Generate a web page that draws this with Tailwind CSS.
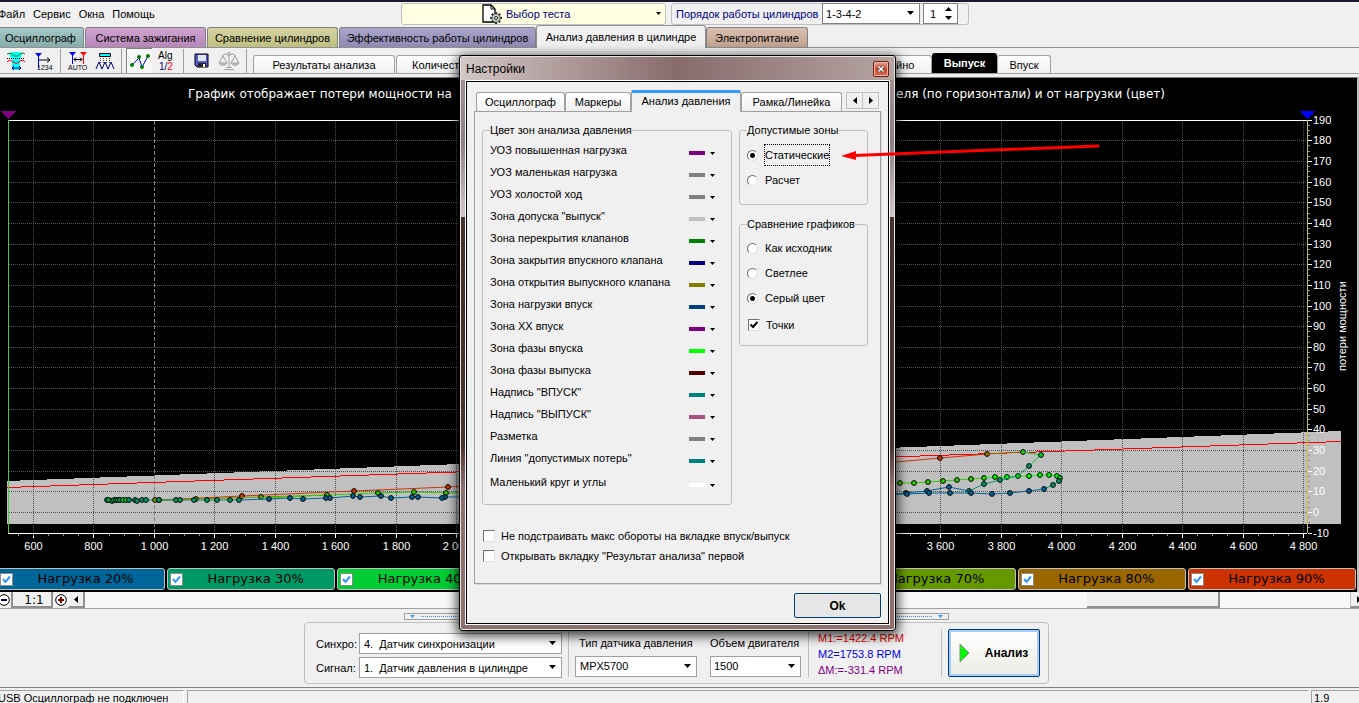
<!DOCTYPE html>
<html lang="ru">
<head>
    <meta charset="UTF-8">
    <meta name="viewport" content="width=device-width, initial-scale=1.0">
    <title>USB Осциллограф</title>
    <script src="https://cdn.jsdelivr.net/npm/@tailwindcss/browser@4"></script>
</head>
<body class="relative flex h-screen flex-col overflow-hidden border-t-2 border-[#1c1a2c] bg-[#f0f0f0] font-['Liberation_Sans',Arial,sans-serif] text-[11px] leading-4 text-black">

    <!-- Menu and test selection -->
    <header class="flex h-[23px] items-center">
        <nav class="flex w-[401px] gap-2">
            <a href="#" class="-ml-[2px]">Файл</a>
            <a href="#">Сервис</a>
            <a href="#">Окна</a>
            <a href="#">Помощь</a>
        </nav>
        <button class="flex h-[22px] w-[265px] items-center rounded-[3px] border border-[#c0c0c0] bg-[#ffffe1] pr-1 pl-20 text-[#000080]">
            <svg class="mr-1 h-5 w-5" viewBox="0 0 20 20">
                <path d="M1 1h8l4 4v13H1z" fill="#fff" stroke="#000" stroke-width="1.3"/>
                <path d="M9 1v4h4" fill="none" stroke="#000"/>
                <path d="M14 8v12M8 14h12M9.800 9.800l8.400 8.400M18.200 9.800l-8.400 8.400" stroke="#333" stroke-width="2.200"/>
                <circle cx="14" cy="14" r="4.200" fill="#c4d8c4" stroke="#444"/>
                <circle cx="14" cy="14" r="1.500" fill="#fff" stroke="#222"/>
            </svg>
            <span>Выбор теста</span>
            <svg class="ml-auto h-[3px] w-[5px]" viewBox="0 0 5 3"><path d="M0 0h5L2.500 3z"/></svg>
        </button>
        <div class="ml-[5px] flex h-[22px] items-center rounded-[3px] border border-[#c0c0c0] pr-[10px] pl-1">
            <label for="order" class="w-[146px] whitespace-nowrap text-[#000080]">Порядок работы цилиндров</label>
            <div class="relative">
                <select id="order" class="block h-[21px] w-[98px] appearance-none border border-[#808080] bg-white px-[3px]"><option>1-3-4-2</option></select>
                <svg class="pointer-events-none absolute top-2 right-[6px] h-1 w-[7px]" viewBox="0 0 7 4"><path d="M0 0h7L3.500 4z"/></svg>
            </div>
            <div class="relative ml-[3px]">
                <input type="text" aria-label="Номер цилиндра" value="1" class="block h-[21px] w-[35px] border border-[#808080] bg-white px-[6px]">
                <svg class="pointer-events-none absolute top-1 right-[6px] h-[13px] w-[7px]" viewBox="0 0 7 13"><path d="M0 4h7L3.500 0zM0 9h7l-3.500 4z"/></svg>
            </div>
        </div>
    </header>

    <!-- Mode tabs -->
    <div class="flex h-[23px] items-end gap-px border-b border-[#909090] whitespace-nowrap">
        <button class="-ml-[3px] h-5 w-[87px] rounded-t-[3px] border border-b-0 border-[#808080] bg-linear-to-b from-[#a5c8c6] to-[#86adab]">Осциллограф</button>
        <button class="h-5 w-[121px] rounded-t-[3px] border border-b-0 border-[#808080] bg-linear-to-b from-[#cfa5d0] to-[#b886ba]">Система зажигания</button>
        <button class="h-5 w-[131px] rounded-t-[3px] border border-b-0 border-[#808080] bg-linear-to-b from-[#d3d3a3] to-[#bfbf80]">Сравнение цилиндров</button>
        <div class="flex items-end">
            <button class="h-5 w-[197px] rounded-t-[3px] border border-b-0 border-[#808080] bg-linear-to-b from-[#aaa5c9] to-[#8f89b5]">Эффективность работы цилиндров</button>
            <button class="-mb-px h-[23px] w-[170px] rounded-t-[3px] border border-b-0 border-[#909090] bg-[#f0f0f0]">Анализ давления в цилиндре</button>
            <button class="h-5 w-[102px] rounded-t-[3px] border border-b-0 border-[#808080] bg-linear-to-b from-[#d8bfb0] to-[#c2a190]">Электропитание</button>
        </div>
    </div>

    <!-- Toolbar -->
    <div class="flex h-[26px] items-end border-b border-[#a0a0a0] whitespace-nowrap">
        <div class="flex h-[25px] items-center">
            <button class="ml-[6px]" aria-label="Зоны">
                <svg class="h-5 w-5" viewBox="0 0 20 20" fill="none">
                    <path d="M6 1h8l2 2-2 6v10H6V9L3 3z" fill="#0ff"/>
                    <path d="M1 3l3-1 3 2 1 1h4l2-2 3-1 2 1" stroke="#080"/>
                    <path d="M1 7.500h18" stroke="#000" stroke-dasharray="1 1"/>
                    <path d="M1 11l3-2 3 2 2 1h3l2-2 3-1 2 2" stroke="#f00"/>
                    <path d="M6 17h9M8 15l-2 2 2 2M13 15l2 2-2 2" stroke="#000080"/>
                </svg>
            </button>
            <button class="ml-[9px]" aria-label="Нумерация">
                <svg class="h-5 w-[18px]" viewBox="0 0 18 20">
                    <path d="M0 2h7L3.500 6z" fill="#00f"/><path d="M3.500 4v13" stroke="#00f"/>
                    <path d="M4 9h11M12 6.500l3 2.500-3 2.500" fill="none" stroke="#000"/>
                    <text x="2" y="19" font-size="7">1234</text>
                </svg>
            </button>
            <div class="ml-[7px] h-6 w-px bg-[#a0a0a0]"></div>
            <button class="ml-[7px]" aria-label="Авто">
                <svg class="h-5 w-5" viewBox="0 0 20 20">
                    <path d="M1 1h7L4.500 5z" fill="#00f"/><path d="M4.500 4v9" stroke="#00f"/>
                    <path d="M12 1h7l-3.500 4z" fill="#f00"/><path d="M15.500 4v9" stroke="#f00"/>
                    <path d="M6 8.500h8M8 6.500l-2 2 2 2M12 6.500l2 2-2 2" fill="none" stroke="#000"/>
                    <text x="0" y="19" font-size="7">AUTO</text>
                </svg>
            </button>
            <button class="ml-[7px]" aria-label="Сигнал">
                <svg class="h-5 w-5" viewBox="0 0 20 20" fill="none">
                    <path d="M4.500 2.500h11v3h-11z" fill="#0ff" stroke="#000"/>
                    <path d="M5.500 7v6M8.500 7v6M11.500 7v6M14.500 7v6" stroke="#444" stroke-dasharray="1 1"/>
                    <path d="M1 18l3-7 3 7 3-7 3 7 3-7 3 7" stroke="#000080"/>
                </svg>
            </button>
            <div class="ml-[6px] h-6 w-px bg-[#a0a0a0]"></div>
            <button class="ml-1 flex h-[25px] w-[26px] items-center justify-center border-t border-l border-[#808080] bg-[#f8f8f8]" aria-label="Точки">
                <svg class="h-4 w-5" viewBox="0 0 20 16">
                    <path d="M2 12l7-7 3 9 6-11" fill="none" stroke="#00f"/>
                    <g fill="#008000"><circle cx="2" cy="12" r="2"/><circle cx="9" cy="4" r="2"/><circle cx="12" cy="14" r="2"/><circle cx="18" cy="3" r="2"/></g>
                </svg>
            </button>
            <button class="ml-[6px] flex w-[18px] flex-col" aria-label="Алгоритм">
                <svg class="h-5 w-[18px]" viewBox="0 0 18 20">
                    <text x="0" y="8" font-size="10">Alg</text>
                    <text x="1" y="19" font-size="10" fill="#000080">1/<tspan fill="#f00">2</tspan></text>
                </svg>
            </button>
            <div class="ml-[7px] h-6 w-px bg-[#a0a0a0]"></div>
            <button class="ml-[10px]" aria-label="Сохранить">
                <svg class="h-4 w-4" viewBox="0 0 16 16">
                    <path d="M1 1h13v13H3l-2-2z" fill="#5a5ac8" stroke="#000"/>
                    <path d="M4 2h8v6H4z" fill="#dfe6f5"/><path d="M4 10h8v4H4z" fill="#222"/><path d="M9 11h2v3H9z" fill="#fff"/>
                </svg>
            </button>
            <button class="ml-[8px]" aria-label="Весы">
                <svg class="h-5 w-[22px]" viewBox="0 0 22 20" fill="none" stroke="#a0a0a0">
                    <circle cx="11" cy="3" r="1.500"/>
                    <path d="M11 4v13M4 5l3-2 4 1 4-1 3 2M6 18.500h10M8 16.500h6"/>
                    <path d="M5 5l-4 7M5 5l4 7M17 5l-4 7M17 5l4 7"/><path d="M1 12c1 3 7 3 8 0zM13 12c1 3 7 3 8 0z" fill="#c8c8c8"/>
                </svg>
            </button>
            <div class="ml-[6px] h-6 w-px bg-[#a0a0a0]"></div>
        </div>
        <button class="ml-[6px] h-[18px] w-[142px] rounded-t-[3px] border border-b-0 border-[#a0a0a0] bg-linear-to-b from-white to-[#f0f0f0]">Результаты анализа</button>
        <button class="ml-px h-[18px] w-[456px] rounded-t-[3px] border border-b-0 border-[#a0a0a0] bg-linear-to-b from-white to-[#f0f0f0] pl-[15px] text-left">Количество</button>
        <button class="ml-px h-[18px] w-[79px] rounded-t-[3px] border border-b-0 border-[#a0a0a0] bg-linear-to-b from-white to-[#f0f0f0]">Линейно</button>
        <button class="h-5 w-[65px] rounded-t-[3px] bg-black font-bold text-white">Выпуск</button>
        <button class="h-[18px] w-[54px] rounded-t-[3px] border border-b-0 border-[#a0a0a0] bg-linear-to-b from-white to-[#f0f0f0]">Впуск</button>
    </div>

    <!-- Chart -->
    <main class="mt-[3px] border-t border-r-2 border-t-[#808080] border-r-[#c0c0c0] bg-black">
        <svg id="chart" class="block w-full" viewBox="0 78 1357 489" font-size="11" fill="#fff" shape-rendering="crispEdges">
            <g font-family="DejaVu Sans, Verdana, sans-serif" font-size="12">
                <text x="188" y="98">График отображает потери мощности на</text>
                <text x="1165" y="98" text-anchor="end">оборотов двигателя (по горизонтали) и от нагрузки (цвет)</text>
            </g>
            <path d="M7 481L1341 431V524H7z" fill="#c0c0c0"/>
            <g id="grid" fill="none"></g>
            <path d="M7 487.500L1341 441.500" stroke="#f00" fill="none"/>
            <path d="M8 120.500H1307M8 533.500H1307" stroke="#fff"/>
            <path d="M8.500 120V533" stroke="#4c4"/>
            <path d="M1307.500 120V533" stroke="#c8c040"/>
            <path d="M0 111h16l-8 8z" fill="#800080"/>
            <path d="M1299 111h16l-8 8z" fill="#00f"/>
            <g id="axes"></g>
            <g id="series" shape-rendering="auto"></g>
            <text transform="translate(1346 371) rotate(-90)">потери мощности</text>
        </svg>

        <!-- Load legend -->
        <div class="mr-px -ml-[3px] grid grid-cols-8 gap-[2px] pt-px pb-[2px] font-['DejaVu_Sans',Verdana,sans-serif] text-[13px] whitespace-nowrap">
            <label class="flex h-[22px] items-center rounded-[3px] border border-[#c0c0c0] bg-[#006699] pl-[2px]"><input type="checkbox" checked class="h-[13px] w-[13px] appearance-none border border-[#8a8a8a] bg-white"><svg class="-ml-[11px] h-[9px] w-[9px]" viewBox="0 0 9 9"><path d="M1 4l2.500 3L8 1.500" fill="none" stroke="#3399ff" stroke-width="2"/></svg><span class="flex-1 pr-1 text-center">Нагрузка 20%</span></label>
            <label class="flex h-[22px] items-center rounded-[3px] border border-[#c0c0c0] bg-[#009966] pl-[2px]"><input type="checkbox" checked class="h-[13px] w-[13px] appearance-none border border-[#8a8a8a] bg-white"><svg class="-ml-[11px] h-[9px] w-[9px]" viewBox="0 0 9 9"><path d="M1 4l2.500 3L8 1.500" fill="none" stroke="#3399ff" stroke-width="2"/></svg><span class="flex-1 pr-1 text-center">Нагрузка 30%</span></label>
            <label class="flex h-[22px] items-center rounded-[3px] border border-[#c0c0c0] bg-[#00cc33] pl-[2px]"><input type="checkbox" checked class="h-[13px] w-[13px] appearance-none border border-[#8a8a8a] bg-white"><svg class="-ml-[11px] h-[9px] w-[9px]" viewBox="0 0 9 9"><path d="M1 4l2.500 3L8 1.500" fill="none" stroke="#3399ff" stroke-width="2"/></svg><span class="flex-1 pr-1 text-center">Нагрузка 40%</span></label>
            <label class="flex h-[22px] items-center rounded-[3px] border border-[#c0c0c0] bg-[#00ff00] pl-[2px]"><input type="checkbox" checked class="h-[13px] w-[13px] appearance-none border border-[#8a8a8a] bg-white"><svg class="-ml-[11px] h-[9px] w-[9px]" viewBox="0 0 9 9"><path d="M1 4l2.500 3L8 1.500" fill="none" stroke="#3399ff" stroke-width="2"/></svg><span class="flex-1 pr-1 text-center">Нагрузка 50%</span></label>
            <label class="flex h-[22px] items-center rounded-[3px] border border-[#c0c0c0] bg-[#33cc00] pl-[2px]"><input type="checkbox" checked class="h-[13px] w-[13px] appearance-none border border-[#8a8a8a] bg-white"><svg class="-ml-[11px] h-[9px] w-[9px]" viewBox="0 0 9 9"><path d="M1 4l2.500 3L8 1.500" fill="none" stroke="#3399ff" stroke-width="2"/></svg><span class="flex-1 pr-1 text-center">Нагрузка 60%</span></label>
            <label class="flex h-[22px] items-center rounded-[3px] border border-[#c0c0c0] bg-[#669900] pl-[2px]"><input type="checkbox" checked class="h-[13px] w-[13px] appearance-none border border-[#8a8a8a] bg-white"><svg class="-ml-[11px] h-[9px] w-[9px]" viewBox="0 0 9 9"><path d="M1 4l2.500 3L8 1.500" fill="none" stroke="#3399ff" stroke-width="2"/></svg><span class="flex-1 pr-1 text-center">Нагрузка 70%</span></label>
            <label class="flex h-[22px] items-center rounded-[3px] border border-[#c0c0c0] bg-[#996600] pl-[2px]"><input type="checkbox" checked class="h-[13px] w-[13px] appearance-none border border-[#8a8a8a] bg-white"><svg class="-ml-[11px] h-[9px] w-[9px]" viewBox="0 0 9 9"><path d="M1 4l2.500 3L8 1.500" fill="none" stroke="#3399ff" stroke-width="2"/></svg><span class="flex-1 pr-1 text-center">Нагрузка 80%</span></label>
            <label class="flex h-[22px] items-center rounded-[3px] border border-[#c0c0c0] bg-[#cc3300] pl-[2px]"><input type="checkbox" checked class="h-[13px] w-[13px] appearance-none border border-[#8a8a8a] bg-white"><svg class="-ml-[11px] h-[9px] w-[9px]" viewBox="0 0 9 9"><path d="M1 4l2.500 3L8 1.500" fill="none" stroke="#3399ff" stroke-width="2"/></svg><span class="flex-1 pr-1 text-center">Нагрузка 90%</span></label>
        </div>
    </main>

    <!-- Zoom and scroll -->
    <div class="flex h-[17px] border-b border-[#a0a0a0]">
        <button class="-ml-1 flex w-[17px] items-center justify-center border-r-2 border-[#909090]" aria-label="Уменьшить">
            <svg class="h-3 w-3" viewBox="0 0 12 12"><circle cx="6" cy="6" r="5.300" fill="#fff" stroke="#000"/><path d="M3 6h6" stroke="#000080" stroke-width="2"/></svg>
        </button>
        <button class="w-10 border-r-2 border-b-2 border-[#909090] pl-1 font-['DejaVu_Sans',Verdana,sans-serif] text-xs">1:1</button>
        <button class="flex w-[15px] items-center justify-center" aria-label="Увеличить">
            <svg class="h-3 w-3" viewBox="0 0 12 12"><circle cx="6" cy="6" r="5.300" fill="#fff" stroke="#000"/><path d="M3 6h6M6 3v6" stroke="#800000" stroke-width="2"/></svg>
        </button>
        <button class="flex w-[17px] items-center justify-center border-r-2 border-b-2 border-l border-r-[#909090] border-b-[#909090] border-l-white" aria-label="Влево">
            <svg class="h-[7px] w-1" viewBox="0 0 4 7"><path d="M4 0v7L0 3.500z"/></svg>
        </button>
        <div class="flex flex-1 justify-end bg-[repeating-conic-gradient(#ffffff_0_25%,#f2f2f2_0_50%)] bg-[length:2px_2px] pr-[130px]">
            <div class="w-[133px] border-r-2 border-b-2 border-[#909090] bg-[#f0f0f0]"></div>
        </div>
        <button class="-mr-[7px] flex w-4 items-center justify-center border-b-2 border-l border-b-[#909090] border-l-[#c0c0c0]" aria-label="Вправо">
            <svg class="h-[7px] w-1" viewBox="0 0 4 7"><path d="M0 0v7l4-3.500z"/></svg>
        </button>
    </div>

    <!-- Bottom panel -->
    <section class="mt-1 ml-[304px] w-[745px]">
        <div class="mx-[100px] flex h-[7px] items-center border border-[#a0a0a0] px-[5px]">
            <svg class="h-[3px] w-[5px]" viewBox="0 0 5 3"><path d="M0 0h5L2.500 3z" fill="#39f"/></svg>
            <div class="mx-[6px] flex-1 border-t border-dotted border-[#3399ff]"></div>
            <svg class="h-[3px] w-[5px]" viewBox="0 0 5 3"><path d="M0 0h5L2.500 3z" fill="#39f"/></svg>
        </div>
        <div class="mt-[2px] flex h-[62px] items-center rounded-[4px] border border-[#c0c0c0] pl-[11px]">
            <div class="mt-[5px] grid grid-cols-[43px_203px] items-center gap-y-[3px]">
                <label for="sync">Синхро:</label>
                <div class="relative">
                    <select id="sync" class="block h-[21px] w-full appearance-none border border-[#a0a0a0] bg-white px-1"><option>4.&nbsp; Датчик синхронизации</option></select>
                    <svg class="pointer-events-none absolute top-2 right-[6px] h-1 w-[7px]" viewBox="0 0 7 4"><path d="M0 0h7L3.500 4z"/></svg>
                </div>
                <label for="signal">Сигнал:</label>
                <div class="relative">
                    <select id="signal" class="block h-[21px] w-full appearance-none border border-[#a0a0a0] bg-white px-1"><option>1.&nbsp; Датчик давления в цилиндре</option></select>
                    <svg class="pointer-events-none absolute top-2 right-[6px] h-1 w-[7px]" viewBox="0 0 7 4"><path d="M0 0h7L3.500 4z"/></svg>
                </div>
            </div>
            <div class="ml-[6px] h-12 w-px bg-[#c0c0c0]"></div>
            <div class="mt-[5px] ml-[6px] w-[122px]">
                <label for="sensor" class="mb-[5px] block pl-1 whitespace-nowrap">Тип датчика давления</label>
                <div class="relative">
                    <select id="sensor" class="block h-[21px] w-full appearance-none border border-[#a0a0a0] bg-white px-1"><option>MPX5700</option></select>
                    <svg class="pointer-events-none absolute top-2 right-[6px] h-1 w-[7px]" viewBox="0 0 7 4"><path d="M0 0h7L3.500 4z"/></svg>
                </div>
            </div>
            <div class="mt-[5px] ml-[13px]">
                <label for="volume" class="mb-[5px] block whitespace-nowrap">Объем двигателя</label>
                <div class="relative w-[91px]">
                    <select id="volume" class="block h-[21px] w-full appearance-none border border-[#a0a0a0] bg-white px-[3px]"><option>1500</option></select>
                    <svg class="pointer-events-none absolute top-2 right-[6px] h-1 w-[7px]" viewBox="0 0 7 4"><path d="M0 0h7L3.500 4z"/></svg>
                </div>
            </div>
            <div class="ml-[7px] h-12 w-px bg-[#c0c0c0]"></div>
            <div class="mt-px ml-[9px] w-[123px]">
                <p class="text-[#e00000]">M1:=1422.4 RPM</p>
                <p class="text-[#0000e0]">M2=1753.8 RPM</p>
                <p class="text-[#800080]">ΔM:=-331.4 RPM</p>
            </div>
            <div class="h-12 w-px bg-[#c0c0c0]"></div>
            <button class="ml-[6px] flex h-12 w-[92px] items-center rounded-[2px] border border-[#003c74] bg-linear-to-b from-white to-[#ececE4] pr-1 pl-[10px] font-bold shadow-[inset_0_0_0_2px_#a8ccf8]">
                <svg class="h-5 w-[11px]" viewBox="0 0 11 20"><path d="M1 1v18l9-9z" fill="#0f0" stroke="#888"/></svg>
                <span class="flex-1 pl-2 text-xs">Анализ</span>
            </button>
        </div>
    </section>

    <!-- Status bar -->
    <footer class="mt-auto flex h-4 gap-[3px] border-t border-[#808080] pt-[2px] leading-[14px] whitespace-nowrap">
        <div class="-ml-[3px] w-[187px] border-t border-r border-t-[#a0a0a0] border-r-white pl-px">USB Осциллограф не подключен</div>
        <div class="flex-1 border-t border-l border-[#a0a0a0]"></div>
        <div class="w-12 border-t border-l border-[#a0a0a0] pl-[2px]">1.9</div>
    </footer>

    <!-- Settings window -->
    <div role="dialog" aria-labelledby="dlg-title" class="absolute top-[53px] left-[459px] flex h-[576px] w-[437px] flex-col rounded-[3px] border border-black bg-[linear-gradient(#a89896,#8c8082_15%,#cfc8ca_28%,#44302e_28%,#4a3432_68%,#8c706e_75%)] px-[5px] pb-[5px] shadow-[0_3px_12px_2px_rgba(0,0,0,0.75),inset_0_0_0_1px_#e8e0e0]">
        <div class="-mx-1 mt-px flex h-[23px] items-center bg-linear-to-r from-[#d2c8c6] via-[#886c6c] to-[#b4a4a2] px-[5px]">
            <h1 id="dlg-title" class="text-xs">Настройки</h1>
            <button class="ml-auto flex h-4 w-4 items-center justify-center rounded-[2px] border border-[#6b2014] bg-linear-to-b from-[#e8a090] via-[#c8452c] to-[#d86a4c] shadow-[inset_0_0_0_1px_#f0b8a8]" aria-label="Закрыть">
                <svg class="h-2 w-2" viewBox="0 0 8 8"><path d="M1.500 1.500l5 5M6.500 1.500l-5 5" stroke="#444" stroke-width="3"/><path d="M1.500 1.500l5 5M6.500 1.500l-5 5" stroke="#fff" stroke-width="1.500"/></svg>
            </button>
        </div>
        <div class="flex flex-1 flex-col border border-white">
            <div class="flex flex-1 flex-col border border-black bg-[#f0f0f0] px-[7px]">
                <div class="flex h-[29px] items-end whitespace-nowrap">
                    <button class="ml-[2px] h-[19px] w-[89px] rounded-t-[3px] border border-b-0 border-[#a0a0a0] bg-linear-to-b from-white to-[#f0f0f0]">Осциллограф</button>
                    <button class="h-[19px] w-[66px] rounded-t-[3px] border border-b-0 border-[#a0a0a0] bg-linear-to-b from-white to-[#f0f0f0]">Маркеры</button>
                    <button class="relative -mb-px h-[22px] w-[110px] rounded-t-[2px] border border-t-[3px] border-b-0 border-[#a0a0a0] border-t-[#3399ff] bg-[#f0f0f0] pb-1">Анализ давления</button>
                    <button class="h-[19px] w-[101px] rounded-t-[3px] border border-b-0 border-[#a0a0a0] bg-linear-to-b from-white to-[#f0f0f0]">Рамка/Линейка</button>
                    <button class="mb-[2px] ml-1 flex h-[17px] w-[17px] items-center justify-center border border-[#c0c0c0]" aria-label="Назад"><svg class="h-[7px] w-1" viewBox="0 0 4 7"><path d="M4 0v7L0 3.500z"/></svg></button>
                    <button class="mb-[2px] -ml-px flex h-[17px] w-[17px] items-center justify-center border border-[#c0c0c0]" aria-label="Вперед"><svg class="h-[7px] w-1" viewBox="0 0 4 7"><path d="M0 0v7l4-3.500z"/></svg></button>
                </div>
                <div class="h-[473px] border border-[#a0a0a0] pt-[11px] pl-[7px] shadow-[1px_1px_0_#d8d8d8]">
                    <div class="flex items-start gap-[7px]">
                        <fieldset class="h-[382px] w-[250px] rounded-[3px] border border-[#c0c0c0] px-[7px]">
                            <legend class="leading-[14px]">Цвет зон анализа давления</legend>
                            <ul id="zones" class="pt-[2px]"></ul>
                        </fieldset>
                        <div class="flex w-[129px] flex-col gap-[12px]">
                            <fieldset class="h-[82px] rounded-[3px] border border-[#c0c0c0] px-[7px]">
                                <legend class="leading-[14px]">Допустимые зоны</legend>
                                <div class="flex flex-col gap-[3px] pt-[7px]">
                                    <label class="flex h-[22px] items-center gap-[6px]"><input type="radio" name="zone" checked class="h-[11px] w-[11px] appearance-none rounded-full border border-[#707070] border-r-[#e0e0e0] border-b-[#e0e0e0] bg-white checked:bg-[radial-gradient(circle,#000_2px,#fff_3px)]"><span class="flex h-[22px] items-center border border-dotted border-black whitespace-nowrap">Статические</span></label>
                                    <label class="flex h-[22px] items-center gap-[7px]"><input type="radio" name="zone" class="h-[11px] w-[11px] appearance-none rounded-full border border-[#707070] border-r-[#e0e0e0] border-b-[#e0e0e0] bg-white checked:bg-[radial-gradient(circle,#000_2px,#fff_3px)]">Расчет</label>
                                </div>
                            </fieldset>
                            <fieldset class="h-[129px] rounded-[3px] border border-[#c0c0c0] px-[7px]">
                                <legend class="leading-[14px]">Сравнение графиков</legend>
                                <div class="flex flex-col gap-[3px] pt-[6px]">
                                    <label class="flex h-[22px] items-center gap-[7px]"><input type="radio" name="cmp" class="h-[11px] w-[11px] appearance-none rounded-full border border-[#707070] border-r-[#e0e0e0] border-b-[#e0e0e0] bg-white checked:bg-[radial-gradient(circle,#000_2px,#fff_3px)]">Как исходник</label>
                                    <label class="flex h-[22px] items-center gap-[7px]"><input type="radio" name="cmp" class="h-[11px] w-[11px] appearance-none rounded-full border border-[#707070] border-r-[#e0e0e0] border-b-[#e0e0e0] bg-white checked:bg-[radial-gradient(circle,#000_2px,#fff_3px)]">Светлее</label>
                                    <label class="flex h-[22px] items-center gap-[7px]"><input type="radio" name="cmp" checked class="h-[11px] w-[11px] appearance-none rounded-full border border-[#707070] border-r-[#e0e0e0] border-b-[#e0e0e0] bg-white checked:bg-[radial-gradient(circle,#000_2px,#fff_3px)]">Серый цвет</label>
                                    <label class="mt-[2px] ml-px flex h-[22px] items-center"><input type="checkbox" checked class="h-3 w-3 appearance-none border border-[#707070] border-r-[#e0e0e0] border-b-[#e0e0e0] bg-white"><svg class="mr-2 -ml-[10px] h-2 w-2" viewBox="0 0 8 8"><path d="M.5 3.500L3 6l4.500-5" fill="none" stroke="#000" stroke-width="2"/></svg>Точки</label>
                                </div>
                            </fieldset>
                        </div>
                    </div>
                    <div class="mt-[23px] flex flex-col gap-1 pl-px whitespace-nowrap">
                        <label class="flex items-center gap-[6px]"><input type="checkbox" class="h-3 w-3 appearance-none border border-[#707070] border-r-[#e0e0e0] border-b-[#e0e0e0] bg-white">Не подстраивать макс обороты на вкладке впуск/выпуск</label>
                        <label class="flex items-center gap-[6px]"><input type="checkbox" class="h-3 w-3 appearance-none border border-[#707070] border-r-[#e0e0e0] border-b-[#e0e0e0] bg-white">Открывать вкладку "Результат анализа" первой</label>
                    </div>
                </div>
                <button class="mt-[9px] h-[25px] w-[87px] self-end rounded-[2px] border border-[#003c74] bg-[#e6e6e6] text-xs font-bold">Ok</button>
            </div>
        </div>
    </div>

    <!-- Callout arrow -->
    <svg class="pointer-events-none absolute top-[138px] left-[840px] h-6 w-[262px]" viewBox="0 0 262 24">
        <path d="M258 6L14 15.500" stroke="#f00" stroke-width="3" stroke-linecap="round"/>
        <path d="M1 16l15-5v9z" fill="#f00"/>
    </svg>

    <template id="zone-row">
        <li class="flex h-[22px] items-center last:mt-[2px]">
            <span class="flex-1 whitespace-nowrap"></span>
            <button class="flex items-center gap-[5px] pt-[6px] pr-[9px]"><i class="h-1 w-4"></i><svg class="h-[3px] w-[5px]" viewBox="0 0 5 3"><path d="M0 0h5L2.500 3z"/></svg></button>
        </li>
    </template>

    <script>
        // Colour rows of the settings window
        const zones = [
            ['УОЗ повышенная нагрузка', '#800080'],
            ['УОЗ маленькая нагрузка', '#808080'],
            ['УОЗ холостой ход', '#808080'],
            ['Зона допуска "выпуск"', '#c0c0c0'],
            ['Зона перекрытия клапанов', '#008000'],
            ['Зона закрытия впускного клапана', '#000080'],
            ['Зона открытия выпускного клапана', '#808000'],
            ['Зона нагрузки впуск', '#004080'],
            ['Зона XX впуск', '#800080'],
            ['Зона фазы впуска', '#00ff00'],
            ['Зона фазы выпуска', '#500000'],
            ['Надпись "ВПУСК"', '#008080'],
            ['Надпись "ВЫПУСК"', '#a85080'],
            ['Разметка', '#808080'],
            ['Линия "допустимых потерь"', '#008080'],
            ['Маленький круг и углы', '#ffffff'],
        ];
        const row = document.getElementById('zone-row');
        zones.forEach(([name, color]) => {
            const li = row.content.cloneNode(true);
            li.querySelector('span').textContent = name;
            li.querySelector('button').setAttribute('aria-label', name);
            li.querySelector('i').style.backgroundColor = color;
            document.getElementById('zones').append(li);
        });

        // Grid, ticks and axis labels
        const px = rpm => Math.round(33 + (rpm - 600) * 0.3024) + 0.5;
        const py = v => Math.round(512 - v * 2.065) + 0.5;
        let grid = '', axes = '';
        for (let v = -10; v <= 190; v += 10) {
            const y = py(v);
            if (v > -10 && v < 190) grid += `<path d="M9 ${y}H1307" stroke="#505050" stroke-dasharray="1 1"/>`;
            axes += `<path d="M1308 ${y}h4" stroke="#fff"/><text x="1313" y="${y + 3.5}">${v}</text>`;
            for (let k = 1; k < 4 && v < 190; k++) axes += `<path d="M1308 ${py(v + k * 2.5)}h2" stroke="#909090"/>`;
        }
        for (let r = 600; r <= 4800; r += 200) {
            const x = px(r);
            grid += r === 1000
                ? `<path d="M${x} 121V533" stroke="#808080" stroke-dasharray="4 2"/>`
                : `<path d="M${x} 121V533" stroke="#505050" stroke-dasharray="1 1"/>`;
            const label = r < 1000 ? r : Math.floor(r / 1000) + ' ' + String(r % 1000).padStart(3, '0');
            axes += `<path d="M${x} 534v4" stroke="#fff"/><text x="${x}" y="550" text-anchor="middle">${label}</text>`;
            for (let k = r === 600 ? -1 : 1; k < 4 && r < 4800; k++) axes += `<path d="M${px(r + k * 50)} 534v2" stroke="#909090"/>`;
        }
        document.getElementById('grid').innerHTML = grid;
        document.getElementById('axes').innerHTML = axes;

        // Measured curves: line colour, then [x, y, point colour]
        const B = '#006699', T = '#009966', G = '#00cc33', L = '#00ff00', M = '#33cc00', O = '#669900', W = '#996600', R = '#cc3300';
        const series = [
            [R, [[159, 500], [242, 496, R], [354, 491, R], [448, 487, R], [700, 475], [896, 462], [940, 458, R], [987, 454, W]]],
            [W, [[987, 454], [1023, 452, M]]],
            [G, [[1023, 452], [1041, 455, G], [1029, 466]]],
            [O, [[159, 500, O], [196, 499, O], [261, 497, O], [327, 495]]],
            [M, [[261, 498], [327, 495, M], [378, 493, M], [414, 492, M], [446, 493, M], [700, 488], [900, 483, M], [914, 483, M], [928, 482, M], [943, 481, M], [957, 480, M], [971, 479, M], [984, 478, M]]],
            [L, [[984, 478], [995, 477, L], [1007, 477, L], [1018, 476, L], [1029, 476, L], [1040, 475, L], [1049, 475, L], [1057, 476, L], [1060, 478, G]]],
            [T, [[1029, 466, T], [1018, 476], [1000, 480, T], [984, 484, T], [969, 491, T]]],
            [B, [[969, 491], [949, 487, B], [927, 491, B], [906, 493, B], [896, 494]]],
            [T, [[1060, 478], [1059, 481, T], [1053, 485, T], [1044, 489, B]]],
            [B, [[1044, 489], [1029, 491, B], [1010, 493, B], [992, 494, B], [971, 493, B], [950, 493, B], [929, 493, B], [907, 494, B], [700, 496], [445, 497, B], [442, 498, B], [418, 497, B], [412, 497, B], [391, 498, B], [381, 496, B], [360, 497, B], [353, 496, B], [330, 498, B], [326, 498, B], [303, 499, B], [290, 498, B], [269, 499, B], [239, 500]]],
            [T, [[107, 500, T], [109, 500, G], [112, 501, T], [114, 500, G], [116, 500, T], [118, 500, G], [120, 500, T], [123, 500, G], [126, 500, G], [129, 500, T], [135, 500, T], [137, 501, T], [142, 500, T], [146, 500, T], [155, 500, O], [159, 500, T], [176, 500, T], [180, 500, T], [194, 500, T], [207, 500, T], [217, 500, T], [230, 500, T], [239, 500, T]]],
        ];
        document.getElementById('series').innerHTML = series.map(([color, pts]) =>
            `<polyline points="${pts.map(p => p[0] + ',' + p[1]).join(' ')}" fill="none" stroke="${color}"/>` +
            pts.filter(p => p[2]).map(p => `<circle cx="${p[0]}" cy="${p[1]}" r="2.4" fill="${p[2]}" stroke="#000"/>`).join('')
        ).join('');
    </script>
</body>
</html>
